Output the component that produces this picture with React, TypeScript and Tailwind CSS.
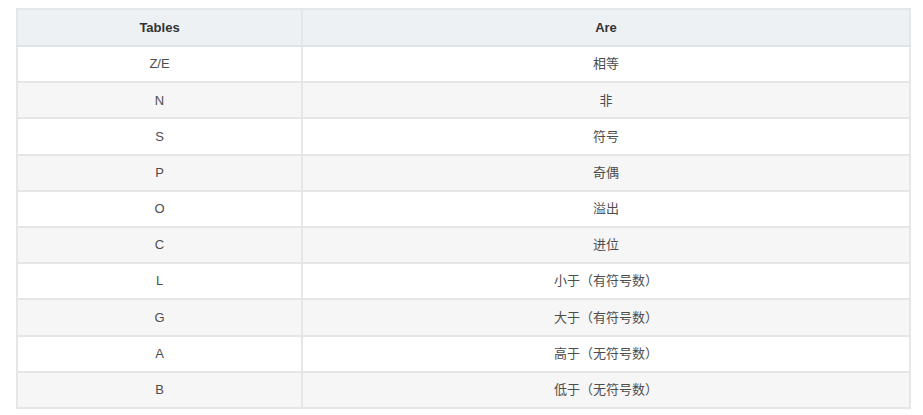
const rows: [string, string][] = [
  ["Z/E", "相等"],
  ["N", "非"],
  ["S", "符号"],
  ["P", "奇偶"],
  ["O", "溢出"],
  ["C", "进位"],
  ["L", "小于（有符号数）"],
  ["G", "大于（有符号数）"],
  ["A", "高于（无符号数）"],
  ["B", "低于（无符号数）"],
];

export default function App() {
  return (
    <div
      className="min-h-screen bg-white pl-[16px] pr-[12px] pt-[8px]"
      style={{ fontFamily: '"Liberation Sans", Arial, "Noto Sans CJK SC", sans-serif' }}
    >
      <table className="w-[895px] border-collapse border-2 border-[#e4e6e8] text-[13px] text-[#4d4d4d]">
        <thead>
          <tr className="h-[37px] bg-[#eef1f4] border-b-2 border-[#dfe2e5]">
            <th className="w-[285px] border-r-2 border-[#e4e6e8] font-bold text-[13px] text-[#333]">
              Tables
            </th>
            <th className="font-bold text-[13px] text-[#333]">Are</th>
          </tr>
        </thead>
        <tbody>
          {rows.map(([flag, meaning], i) => (
            <tr
              key={flag}
              className={
                i % 2 === 0
                  ? "h-[36.2px] bg-white border-t-2 border-[#e4e6e8]"
                  : "h-[36.2px] bg-[#f6f6f6] border-t-2 border-[#e4e6e8]"
              }
            >
              <td className="border-r-2 border-[#e4e6e8] text-center">{flag}</td>
              <td className="text-center">{meaning}</td>
            </tr>
          ))}
        </tbody>
      </table>
    </div>
  );
}
